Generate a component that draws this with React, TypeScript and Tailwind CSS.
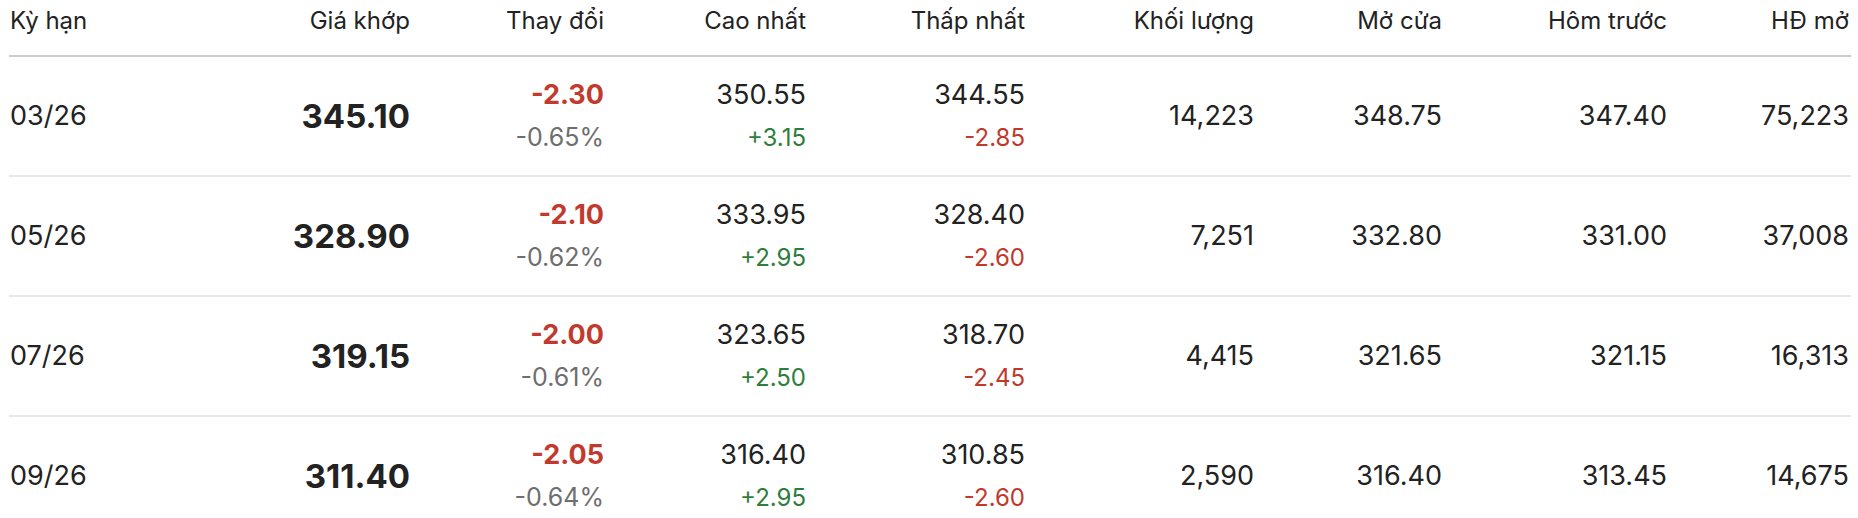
import React from "react";

type Row = {
  term: string;
  price: string;
  chg: string;
  pct: string;
  high: string;
  highD: string;
  low: string;
  lowD: string;
  vol: string;
  open: string;
  prev: string;
  oi: string;
};

const rows: Row[] = [
  { term: "03/26", price: "345.10", chg: "-2.30", pct: "-0.65%", high: "350.55", highD: "+3.15", low: "344.55", lowD: "-2.85", vol: "14,223", open: "348.75", prev: "347.40", oi: "75,223" },
  { term: "05/26", price: "328.90", chg: "-2.10", pct: "-0.62%", high: "333.95", highD: "+2.95", low: "328.40", lowD: "-2.60", vol: "7,251", open: "332.80", prev: "331.00", oi: "37,008" },
  { term: "07/26", price: "319.15", chg: "-2.00", pct: "-0.61%", high: "323.65", highD: "+2.50", low: "318.70", lowD: "-2.45", vol: "4,415", open: "321.65", prev: "321.15", oi: "16,313" },
  { term: "09/26", price: "311.40", chg: "-2.05", pct: "-0.64%", high: "316.40", highD: "+2.95", low: "310.85", lowD: "-2.60", vol: "2,590", open: "316.40", prev: "313.45", oi: "14,675" },
];

const headers = ["Kỳ hạn", "Giá khớp", "Thay đổi", "Cao nhất", "Thấp nhất", "Khối lượng", "Mở cửa", "Hôm trước", "HĐ mở"];

const grid = "grid grid-cols-[200px_201px_194px_202px_219px_229px_188px_225px_182px] pr-[2px]";

export default function App() {
  return (
    <div className="w-[1858px] h-[518px] bg-white overflow-hidden pl-[9px] text-[#222222]" style={{ fontFamily: "Inter, 'Noto Sans', sans-serif" }}>
      <div className="w-[1842px]">
        <div className={`${grid} h-[57px] border-b-2 border-[#c9cdd1] box-border pt-[5px] text-[24px] leading-[32px]`}>
          {headers.map((h, i) => (
            <div key={h} className={i === 0 ? "text-left pl-[1px]" : "text-right"}>
              {h}
            </div>
          ))}
        </div>
        {rows.map((r) => (
          <div key={r.term} className={`${grid} h-[120px] border-b-2 border-[#e5e7eb] box-border items-center text-[27px]`}>
            <div className="pl-[1px] leading-[36px]">{r.term}</div>
            <div className="text-right text-[33px] font-bold leading-[40px]">{r.price}</div>
            <div className="flex flex-col items-end">
              <div className="text-[27px] font-bold text-[#c23a2e] leading-[43px]">{r.chg}</div>
              <div className="text-[25px] text-[#6e6e6e] leading-[43px]">{r.pct}</div>
            </div>
            <div className="flex flex-col items-end">
              <div className="text-[27px] leading-[43px]">{r.high}</div>
              <div className="text-[24px] text-[#2e7d3c] leading-[43px]">{r.highD}</div>
            </div>
            <div className="flex flex-col items-end">
              <div className="text-[27px] leading-[43px]">{r.low}</div>
              <div className="text-[24px] text-[#c0392b] leading-[43px]">{r.lowD}</div>
            </div>
            <div className="text-right leading-[36px]">{r.vol}</div>
            <div className="text-right leading-[36px]">{r.open}</div>
            <div className="text-right leading-[36px]">{r.prev}</div>
            <div className="text-right leading-[36px]">{r.oi}</div>
          </div>
        ))}
      </div>
    </div>
  );
}
